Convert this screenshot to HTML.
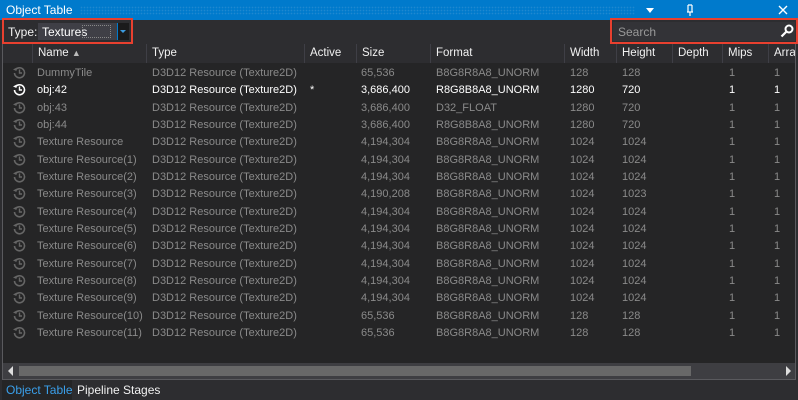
<!DOCTYPE html>
<html><head><meta charset="utf-8"><style>
*{margin:0;padding:0;box-sizing:border-box}
body{width:798px;height:400px;background:#2d2d30;font-family:"Liberation Sans",sans-serif;font-size:11px;color:#f1f1f1;position:relative;overflow:hidden}
.abs{position:absolute}
.title{left:0;top:0;width:798px;height:20px;background:#007acc;color:#fff;font-size:12px;line-height:20px;padding-left:6px}
.dots{left:80px;top:6px;width:555px;height:9px;background-image:radial-gradient(#1f88d0 0.7px,transparent 0.9px);background-size:3px 3px}
.grid{left:2px;top:44px;width:794px;height:336px;border:1px solid #5a5a5e;border-top:none;background:#252526}
.hdr{left:3px;top:44px;width:792px;height:19px;background:#2d2d30}
.hc{position:absolute;top:44px;height:19px;line-height:19px;color:#f1f1f1;padding-left:5px;border-left:1px solid #3f3f46;font-size:11.5px;overflow:hidden;white-space:nowrap}
.row{position:absolute;left:3px;width:792px;height:17px;line-height:18px;color:#8a8a8a}
.row span{position:absolute;top:0;white-space:nowrap}
.row.b{color:#fff}
.ico{position:absolute;left:10px;top:2px;width:13px;height:13px}
</style></head><body>
<div class="abs title">Object Table</div>
<div class="abs dots"></div>
<div class="abs" style="left:646px;top:4px;width:0;height:0;border-left:4px solid transparent;border-right:4px solid transparent;border-top:5px solid #fff;top:8px"></div>
<svg class="abs" style="left:685px;top:4px" width="10" height="13"><path d="M3 1v7M7 1v7M2 8h6M5 8v4M3 1h4" stroke="#fff" stroke-width="1.2" fill="none"/></svg>
<svg class="abs" style="left:778px;top:5px" width="10" height="10"><path d="M1 1l8 8M9 1l-8 8" stroke="#fff" stroke-width="1.4"/></svg>

<div class="abs" style="left:2px;top:18px;width:131px;height:26px;border:2px solid #e8402f"></div>
<div class="abs" style="left:8px;top:24px;line-height:16px;font-size:12px">Type:</div>
<div class="abs" style="left:38px;top:23px;width:79px;height:17px;background:#3f3f46"></div>
<div class="abs" style="left:42px;top:24px;line-height:16px;color:#fff;font-size:12px">Textures</div>
<div class="abs" style="left:82px;top:25px;width:29px;height:13px;border:1px dotted #888"></div>
<div class="abs" style="left:117px;top:23px;width:12px;height:17px;background:#1b1b1c;border-left:1px solid #007acc"></div>
<div class="abs" style="left:120px;top:30px;width:0;height:0;border-left:3px solid transparent;border-right:3px solid transparent;border-top:3px solid #3c9be0"></div>

<div class="abs" style="left:610px;top:18px;width:188px;height:26px;border:2px solid #e8402f"></div>
<div class="abs" style="left:613px;top:22px;width:182px;height:19px;background:#333337"></div>
<div class="abs" style="left:618px;top:24px;line-height:16px;color:#999;font-size:12px">Search</div>
<svg class="abs" style="left:780px;top:24px" width="14" height="14"><circle cx="9" cy="5" r="3.5" stroke="#fff" stroke-width="2" fill="none"/><path d="M6.5 7.5L1.5 12.5" stroke="#fff" stroke-width="2.2"/></svg>

<div class="abs grid"></div>
<div class="abs hdr"></div>
<div class="hc" style="left:32px;width:114px">Name <span style="font-size:9px;color:#bbb">▲</span></div>
<div class="hc" style="left:146px;width:158px">Type</div>
<div class="hc" style="left:304px;width:52px">Active</div>
<div class="hc" style="left:356px;width:74px">Size</div>
<div class="hc" style="left:430px;width:134px">Format</div>
<div class="hc" style="left:564px;width:52px">Width</div>
<div class="hc" style="left:616px;width:56px">Height</div>
<div class="hc" style="left:672px;width:50px">Depth</div>
<div class="hc" style="left:722px;width:46px">Mips</div>
<div class="hc" style="left:768px;width:27px">Array</div>

<div id="rows"></div>
<script>
var d=[["DummyTile","","65,536","B8G8R8A8_UNORM","128","128",0],
["obj:42","*","3,686,400","R8G8B8A8_UNORM","1280","720",1],
["obj:43","","3,686,400","D32_FLOAT","1280","720",0],
["obj:44","","3,686,400","R8G8B8A8_UNORM","1280","720",0],
["Texture Resource","","4,194,304","B8G8R8A8_UNORM","1024","1024",0],
["Texture Resource(1)","","4,194,304","B8G8R8A8_UNORM","1024","1024",0],
["Texture Resource(2)","","4,194,304","B8G8R8A8_UNORM","1024","1024",0],
["Texture Resource(3)","","4,190,208","B8G8R8A8_UNORM","1024","1023",0],
["Texture Resource(4)","","4,194,304","B8G8R8A8_UNORM","1024","1024",0],
["Texture Resource(5)","","4,194,304","B8G8R8A8_UNORM","1024","1024",0],
["Texture Resource(6)","","4,194,304","B8G8R8A8_UNORM","1024","1024",0],
["Texture Resource(7)","","4,194,304","B8G8R8A8_UNORM","1024","1024",0],
["Texture Resource(8)","","4,194,304","B8G8R8A8_UNORM","1024","1024",0],
["Texture Resource(9)","","4,194,304","B8G8R8A8_UNORM","1024","1024",0],
["Texture Resource(10)","","65,536","B8G8R8A8_UNORM","128","128",0],
["Texture Resource(11)","","65,536","B8G8R8A8_UNORM","128","128",0]];
var h="";
d.forEach(function(r,i){var t=64+i*17.33;var c=r[6]?"#fff":"#666";
h+='<div class="row'+(r[6]?' b':'')+'" style="top:'+t+'px">'+
'<svg class="ico" viewBox="0 0 13 13"><path d="M2.2 4.2A5 5 0 1 1 1.5 7" stroke="'+c+'" stroke-width="1.6" fill="none"/><path d="M0 3.5l3.5 1.5 0.2-3.5z" fill="'+c+'"/><path d="M6.5 3.5v3.5h2.5" stroke="'+c+'" stroke-width="1.4" fill="none"/></svg>'+
'<span style="left:34px">'+r[0]+'</span><span style="left:149px">D3D12 Resource (Texture2D)</span>'+
'<span style="left:307px">'+r[1]+'</span><span style="left:358px">'+r[2]+'</span><span style="left:433px">'+r[3]+'</span>'+
'<span style="left:567px">'+r[4]+'</span><span style="left:619px">'+r[5]+'</span><span style="left:726px">1</span><span style="left:771px">1</span></div>';});
document.getElementById("rows").innerHTML=h;
</script>

<div class="abs" style="left:3px;top:363px;width:792px;height:16px;background:#3e3e42"></div>
<div class="abs" style="left:8px;top:366px;width:0;height:0;border-top:5px solid transparent;border-bottom:5px solid transparent;border-right:5px solid #ddd"></div>
<div class="abs" style="left:19px;top:366px;width:672px;height:10px;background:#686868"></div>
<div class="abs" style="left:786px;top:366px;width:0;height:0;border-top:5px solid transparent;border-bottom:5px solid transparent;border-left:5px solid #ddd"></div>

<div class="abs" style="left:2px;top:380px;width:70px;height:20px;background:#252526"></div>
<div class="abs" style="left:6px;top:383px;color:#3a9fea;line-height:14px;font-size:12px">Object Table</div>
<div class="abs" style="left:77px;top:383px;color:#f1f1f1;line-height:14px;font-size:12px">Pipeline Stages</div>
</body></html>
